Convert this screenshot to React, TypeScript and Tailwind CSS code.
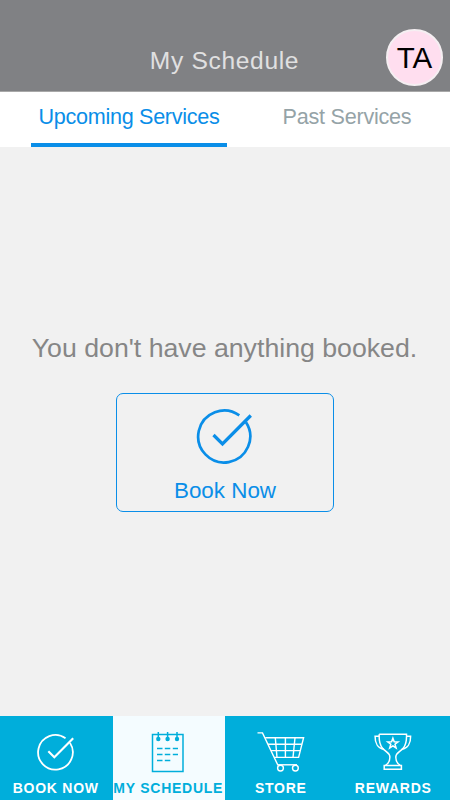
import type { ReactNode } from 'react'

type NavItem = {
  label: string
  icon: ReactNode
  active?: boolean
}

function CheckCircle({ size, stroke }: { size: number; stroke: number }) {
  return (
    <svg width={size} height={size} viewBox="0 0 60 60" fill="none" stroke="currentColor" strokeWidth={stroke}>
      <path d="M44.3 9.3A26 26 0 1 0 51 16.3" />
      <path d="M18.5 29 27.5 38 55.8 9.5" strokeWidth={stroke * 1.2} />
    </svg>
  )
}

function CalendarIcon() {
  return (
    <svg width="34" height="42" viewBox="0 0 34 42" fill="none" stroke="currentColor" strokeWidth="1.5">
      <rect x="1.5" y="3.5" width="30.5" height="37" />
      <path d="M7.3 1v6M16.6 1v6M26 1v6" />
      <g fill="currentColor" stroke="none">
        <circle cx="7.3" cy="8" r="2.2" />
        <circle cx="16.6" cy="8" r="2.2" />
        <circle cx="26" cy="8" r="2.2" />
      </g>
      <path d="M6 17.5h5.5M13.8 17.5h5.5M21.8 17.5H27M6 23.5h5.5M13.8 23.5h5.5M21.8 23.5H27M6 29.5h5.5M13.8 29.5h5.5" />
    </svg>
  )
}

function CartIcon() {
  return (
    <svg width="48" height="40" viewBox="0 0 48 40" fill="none" stroke="currentColor" strokeWidth="1.4">
      <path d="M.5 .9h5l15.2 31.9" />
      <path d="M8.2 5.7h38.4l-5 19.7H17" />
      <path d="M11 12.2h33.8M14 18.6h29.2" />
      <path d="M18.3 5.7l1.7 19.7M28.4 5.7v19.7M38 5.7l-2 19.7" />
      <path d="M20 32.8h20" />
      <circle cx="23.5" cy="36.1" r="2.9" />
      <circle cx="38.4" cy="36.1" r="2.9" />
    </svg>
  )
}

function TrophyIcon() {
  return (
    <svg width="38" height="38" viewBox="0 0 38 38" fill="none" stroke="currentColor" strokeWidth="1.5">
      <path d="M5.2 1.2h27.3c.3 6-.7 10.8-3.3 14-2.9 3.6-7.4 4.4-7.4 8.8 0 4.2 1.4 6.6 4.3 8.1" />
      <path d="M5.2 1.2c-.3 6 .7 10.8 3.3 14 2.9 3.6 7.4 4.4 7.4 8.8 0 4.2-1.4 6.6-4.3 8.1" />
      <path d="M5.3 3.2H1.1c-.2 7.2 3 12.3 8.8 13M32.4 3.2h4.2c.2 7.2-3 12.3-8.8 13" />
      <path d="M10.2 32.5h17.2v3.7H10.2z" />
      <path d="M18.9 5.2l1.3 3.6 3.8.1-3 2.3 1.1 3.7-3.2-2.1-3.2 2.1 1.1-3.7-3-2.3 3.8-.1z" />
    </svg>
  )
}

const navItems: NavItem[] = [
  { label: 'BOOK NOW', icon: <CheckCircle size={40} stroke={2.7} /> },
  { label: 'MY SCHEDULE', icon: <CalendarIcon />, active: true },
  { label: 'STORE', icon: <CartIcon /> },
  { label: 'REWARDS', icon: <TrophyIcon /> },
]

export default function App() {
  return (
    <div className="flex h-[800px] w-[450px] flex-col overflow-hidden bg-[#f1f1f1] font-['Liberation_Sans',Arial,sans-serif]">
      <header className="relative h-[91.5px] shrink-0 border-b border-[#a8a8a8] bg-[#808184] pt-[45px] text-center">
        <h1 className="pr-px text-[24.6px] leading-8 tracking-[0.65px] text-[#e0e0e1]">My Schedule</h1>
        <div className="absolute top-[29px] right-[7px] flex size-[57px] items-center justify-center rounded-full border-2 border-[#f5eff2] bg-[#ffdeef] pt-0.5 text-[29.5px] text-black">
          TA
        </div>
      </header>

      <nav className="flex h-[55.5px] shrink-0 bg-white pl-[31px] text-[21.6px] leading-[49px]">
        <button
          type="button"
          className="flex h-[55px] w-[196px] justify-center border-b-4 border-[#0a8ee8] tracking-[-0.3px] whitespace-nowrap text-[#0a8ee8]"
        >
          Upcoming Services
        </button>
        <button
          type="button"
          className="ml-[22px] flex h-[55px] w-[196px] justify-center border-b-4 border-transparent tracking-[-0.25px] whitespace-nowrap text-[#95a3a7]"
        >
          Past Services
        </button>
      </nav>

      <main className="flex flex-1 flex-col items-center pt-[185px]">
        <p className="pr-px text-[26.7px] leading-8 whitespace-nowrap text-[#868686]">You don't have anything booked.</p>
        <button
          type="button"
          className="mt-[29px] flex h-[119px] w-[218px] flex-col items-center rounded-[7px] border-[1.5px] border-[#0a8ee8] pt-[12px] text-[#0a8ee8]"
        >
          <CheckCircle size={60} stroke={2.7} />
          <span className="mt-[11px] text-[22.4px] leading-7">Book Now</span>
        </button>
      </main>

      <footer className="grid h-[84px] shrink-0 grid-cols-4">
        {navItems.map((item) => (
          <button
            key={item.label}
            type="button"
            className={`flex flex-col items-center ${
              item.active ? 'bg-[#f4fcff] text-[#00aedb]' : 'bg-[#00aedb] text-white'
            }`}
          >
            <span className="flex h-[62px] items-center justify-center pt-[9px] pr-[1.5px]">{item.icon}</span>
            <span className="pr-px text-[14px] leading-5 font-bold tracking-[0.75px] whitespace-nowrap">
              {item.label}
            </span>
          </button>
        ))}
      </footer>
    </div>
  )
}
